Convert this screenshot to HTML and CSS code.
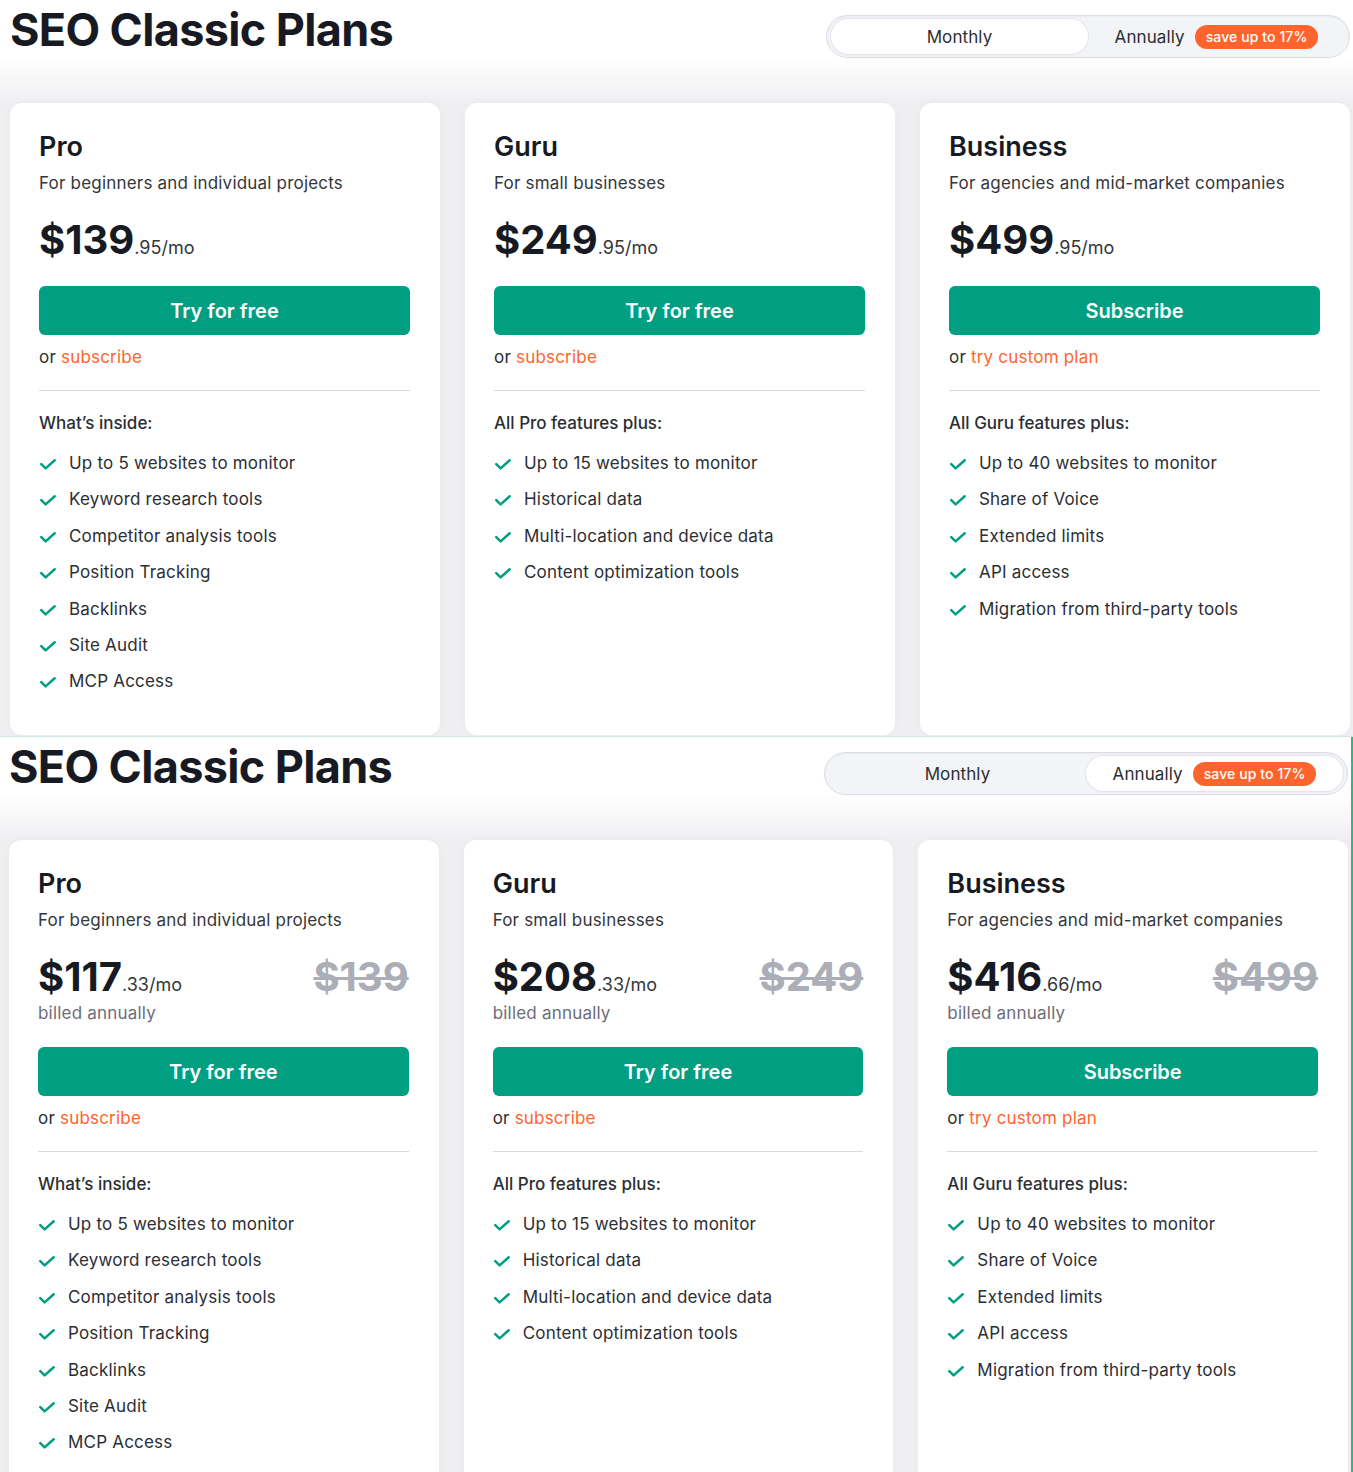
FILE: index.html
```html
<!DOCTYPE html>
<html lang="en">
<head>
    <meta charset="UTF-8">
    <meta name="viewport" content="width=device-width, initial-scale=1.0">
    <title>SEO Classic Plans</title>
    <link rel="stylesheet" href="styles.css">
</head>
<body>
    <!-- Monthly -->
    <section class="plans">
        <div class="plans-head">
            <h1>SEO Classic Plans</h1>
            <div class="toggle">
                <span class="toggle-opt active">Monthly</span>
                <span class="toggle-opt">Annually <span class="badge">save up to 17%</span></span>
            </div>
        </div>
        <div class="cards">
            <div class="card">
                <h2>Pro</h2>
                <p class="card-sub">For beginners and individual projects</p>
                <div class="price-row"><div class="price">$139<span class="cents">.95/mo</span></div></div>
                <button class="btn">Try for free</button>
                <p class="alt">or <a href="#">subscribe</a></p>
                <hr>
                <p class="inside">What’s inside:</p>
                <ul class="features">
                    <li>Up to 5 websites to monitor</li>
                    <li>Keyword research tools</li>
                    <li>Competitor analysis tools</li>
                    <li>Position Tracking</li>
                    <li>Backlinks</li>
                    <li>Site Audit</li>
                    <li>MCP Access</li>
                </ul>
            </div>
            <div class="card">
                <h2>Guru</h2>
                <p class="card-sub">For small businesses</p>
                <div class="price-row"><div class="price">$249<span class="cents">.95/mo</span></div></div>
                <button class="btn">Try for free</button>
                <p class="alt">or <a href="#">subscribe</a></p>
                <hr>
                <p class="inside">All Pro features plus:</p>
                <ul class="features">
                    <li>Up to 15 websites to monitor</li>
                    <li>Historical data</li>
                    <li>Multi-location and device data</li>
                    <li>Content optimization tools</li>
                </ul>
            </div>
            <div class="card">
                <h2>Business</h2>
                <p class="card-sub">For agencies and mid-market companies</p>
                <div class="price-row"><div class="price">$499<span class="cents">.95/mo</span></div></div>
                <button class="btn">Subscribe</button>
                <p class="alt">or <a href="#">try custom plan</a></p>
                <hr>
                <p class="inside">All Guru features plus:</p>
                <ul class="features">
                    <li>Up to 40 websites to monitor</li>
                    <li>Share of Voice</li>
                    <li>Extended limits</li>
                    <li>API access</li>
                    <li>Migration from third-party tools</li>
                </ul>
            </div>
        </div>
    </section>

    <!-- Annually -->
    <section class="plans annual">
        <div class="plans-head">
            <h1>SEO Classic Plans</h1>
            <div class="toggle">
                <span class="toggle-opt">Monthly</span>
                <span class="toggle-opt active">Annually <span class="badge">save up to 17%</span></span>
            </div>
        </div>
        <div class="cards">
            <div class="card">
                <h2>Pro</h2>
                <p class="card-sub">For beginners and individual projects</p>
                <div class="price-row">
                    <div class="price">$117<span class="cents">.33/mo</span></div>
                    <div class="old-price">$139</div>
                </div>
                <p class="billed">billed annually</p>
                <button class="btn">Try for free</button>
                <p class="alt">or <a href="#">subscribe</a></p>
                <hr>
                <p class="inside">What’s inside:</p>
                <ul class="features">
                    <li>Up to 5 websites to monitor</li>
                    <li>Keyword research tools</li>
                    <li>Competitor analysis tools</li>
                    <li>Position Tracking</li>
                    <li>Backlinks</li>
                    <li>Site Audit</li>
                    <li>MCP Access</li>
                </ul>
            </div>
            <div class="card">
                <h2>Guru</h2>
                <p class="card-sub">For small businesses</p>
                <div class="price-row">
                    <div class="price">$208<span class="cents">.33/mo</span></div>
                    <div class="old-price">$249</div>
                </div>
                <p class="billed">billed annually</p>
                <button class="btn">Try for free</button>
                <p class="alt">or <a href="#">subscribe</a></p>
                <hr>
                <p class="inside">All Pro features plus:</p>
                <ul class="features">
                    <li>Up to 15 websites to monitor</li>
                    <li>Historical data</li>
                    <li>Multi-location and device data</li>
                    <li>Content optimization tools</li>
                </ul>
            </div>
            <div class="card">
                <h2>Business</h2>
                <p class="card-sub">For agencies and mid-market companies</p>
                <div class="price-row">
                    <div class="price">$416<span class="cents">.66/mo</span></div>
                    <div class="old-price">$499</div>
                </div>
                <p class="billed">billed annually</p>
                <button class="btn">Subscribe</button>
                <p class="alt">or <a href="#">try custom plan</a></p>
                <hr>
                <p class="inside">All Guru features plus:</p>
                <ul class="features">
                    <li>Up to 40 websites to monitor</li>
                    <li>Share of Voice</li>
                    <li>Extended limits</li>
                    <li>API access</li>
                    <li>Migration from third-party tools</li>
                </ul>
            </div>
        </div>
    </section>
</body>
</html>
```

FILE: styles.css
```css
/* Base */
body {
    margin: 0;
    font-family: Inter, "Noto Sans", Arial, sans-serif;
    color: #2b2e33;
    background: #fff;
    height: 1472px;
    overflow: hidden;
}

.plans {
    height: 737px;
    box-sizing: border-box;
    padding: 0 3px 0 10px;
    border-bottom: 1px solid #d6e6e0;
    background: linear-gradient(to bottom, #fff 0, #fff 58px, #efeff2 104px, #efeff2 100%);
}
.plans.annual {
    height: 735px;
    overflow: hidden;
    padding-left: 9px;
    border-bottom: none;
    border-right: 2px solid #35b586;
    width: 1353px;
}

.plans-head {
    display: flex;
    justify-content: space-between;
    align-items: flex-start;
    height: 56px;
    margin-bottom: 47px;
}
h1 {
    margin: 0;
    padding-top: 2px;
    font-size: 45px;
    line-height: 56px;
    font-weight: 700;
    letter-spacing: -0.65px;
    color: #171a22;
}

/* Toggle */
.toggle {
    margin-top: 15px;
    width: 524px;
    height: 43px;
    box-sizing: border-box;
    padding: 3px 4px;
    display: grid;
    grid-template-columns: 1fr 1fr;
    background: #f3f4f7;
    border: 1px solid #dcdde3;
    border-radius: 22px;
    box-shadow: inset 0 1px 2px rgba(0, 0, 0, 0.04);
}
.toggle-opt {
    display: flex;
    align-items: center;
    justify-content: center;
    gap: 10px;
    font-size: 17px;
    letter-spacing: 0.1px;
    color: #2b2e33;
    border-radius: 18px;
}
.toggle-opt.active {
    background: #fff;
    box-shadow: 0 0 0 1px #e4e5ea, 0 1px 2px rgba(0, 0, 0, 0.06);
}
.badge {
    display: inline-block;
    background: #ff642d;
    color: #fff;
    font-size: 14px;
    font-weight: 500;
    line-height: 24px;
    padding: 0 11px;
    border-radius: 12px;
    letter-spacing: 0.1px;
}

/* Cards */
.cards {
    display: grid;
    grid-template-columns: repeat(3, 1fr);
    gap: 25px;
}
.card {
    height: 632px;
    box-sizing: border-box;
    background: #fff;
    border-radius: 12px;
    padding: 27px 30px 0 29px;
    box-shadow: 0 0 8px rgba(0, 0, 0, 0.03);
}
.annual .card {
    height: 660px;
}
.card h2 {
    margin: 0;
    font-size: 27px;
    line-height: 34px;
    font-weight: 600;
    color: #171a22;
}
.card-sub {
    margin: 7px 0 0;
    font-size: 17px;
    line-height: 24px;
    letter-spacing: 0.2px;
    color: #34363c;
}
.price-row {
    margin-top: 21px;
    height: 48px;
    display: flex;
    justify-content: space-between;
    align-items: baseline;
}
.price {
    font-size: 40px;
    line-height: 48px;
    font-weight: 700;
    color: #171a22;
}
.cents {
    font-size: 18px;
    line-height: 1;
    font-weight: 400;
    color: #34363c;
}
.old-price {
    font-size: 40px;
    line-height: 48px;
    font-weight: 700;
    color: #abadb7;
    text-decoration: line-through;
    text-decoration-thickness: 3px;
}
.billed {
    margin: 0;
    font-size: 17px;
    line-height: 24px;
    letter-spacing: 0.2px;
    color: #6c6e79;
}
.btn {
    display: block;
    width: 100%;
    height: 49px;
    margin-top: 22px;
    border: none;
    border-radius: 6px;
    background: #009f81;
    color: #fff;
    font-family: inherit;
    font-size: 20px;
    font-weight: 600;
    cursor: pointer;
}
.alt {
    margin: 10px 0 0;
    font-size: 17px;
    line-height: 24px;
    letter-spacing: 0.2px;
    color: #2b2e33;
}
.alt a {
    color: #ff642d;
    text-decoration: none;
}
.card hr {
    margin: 21px 0 0;
    border: none;
    border-top: 1px solid #d9dadf;
}
.inside {
    margin: 20px 0 0;
    font-size: 17px;
    line-height: 24px;
    font-weight: 500;
    color: #2b2e33;
}
.features {
    list-style: none;
    margin: 10px 0 0;
    padding: 0;
}
.features li {
    position: relative;
    padding-left: 30px;
    font-size: 17px;
    line-height: 36.4px;
    letter-spacing: 0.2px;
    color: #2b2e33;
}
.features li::before {
    content: "";
    position: absolute;
    left: 1px;
    top: 14px;
    width: 16px;
    height: 11px;
    background: url("data:image/svg+xml;utf8,<svg xmlns='http://www.w3.org/2000/svg' viewBox='0 0 16 11'><polyline points='1.3,5.2 5.6,9.4 14.7,1.3' fill='none' stroke='%23009f81' stroke-width='2.5' stroke-linecap='round' stroke-linejoin='round'/></svg>") no-repeat center / contain;
}
```
